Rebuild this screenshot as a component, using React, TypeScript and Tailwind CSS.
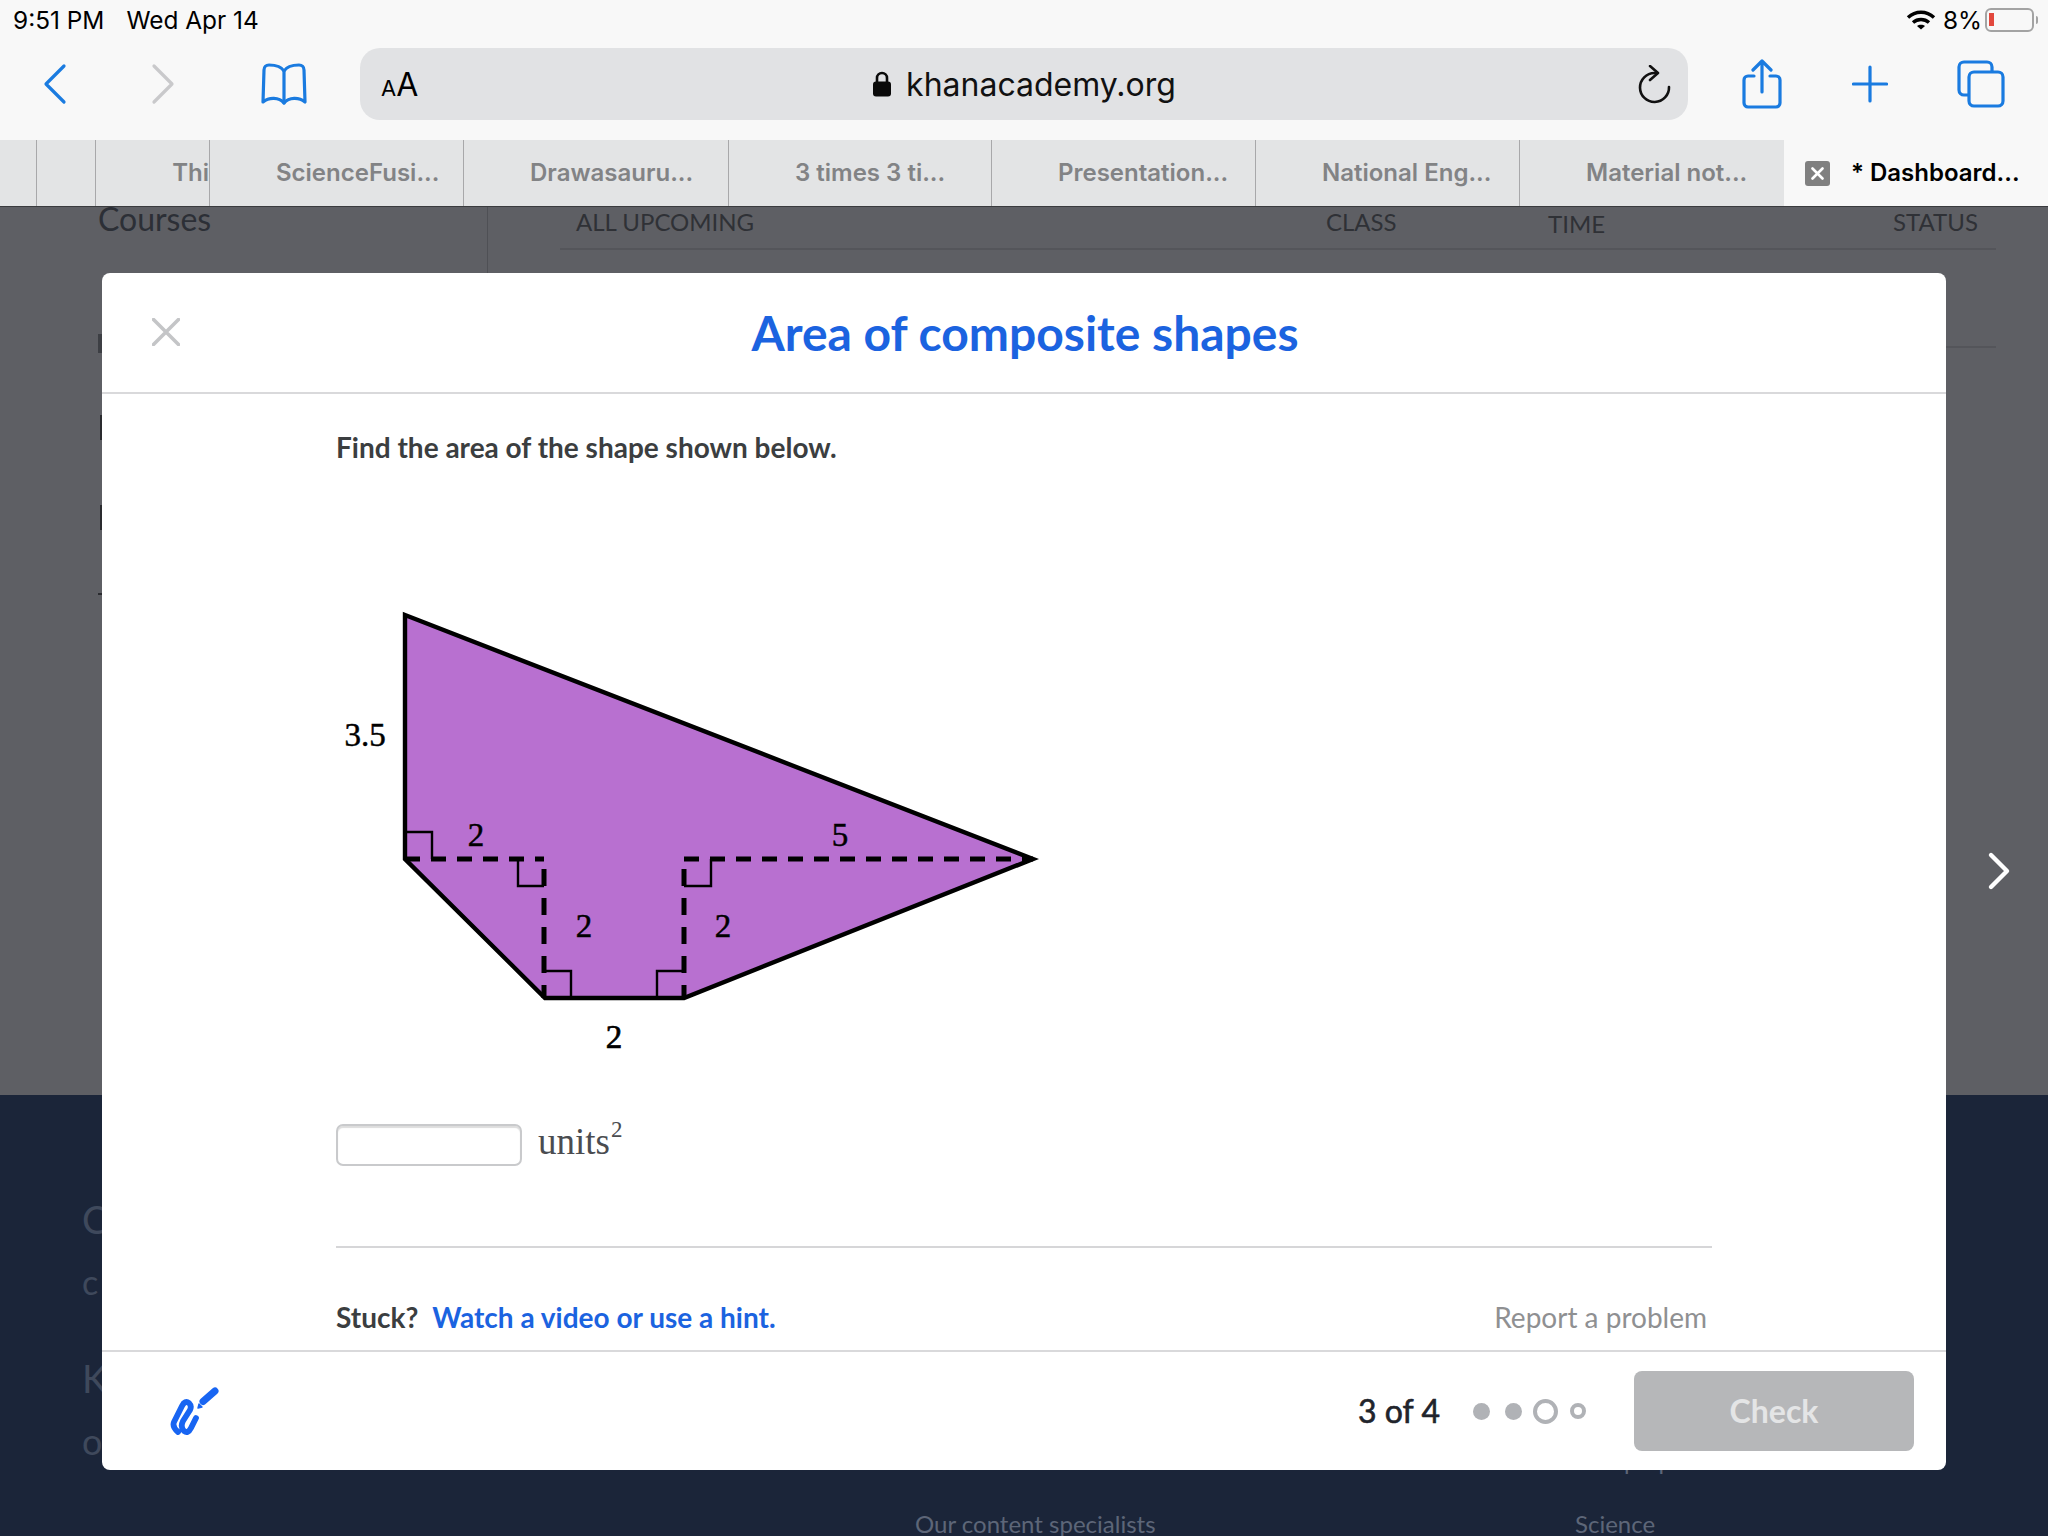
import React from "react";

const lato = "font-['Lato',sans-serif]";
const inter = "font-['Inter',sans-serif]";

const tabs: { w: string; cls: string; label?: string }[] = [
  { w: "w-[37px]", cls: "border-r border-r-[#a8a8aa]" },
  { w: "w-[59px]", cls: "border-r border-r-[#a8a8aa]" },
  { w: "w-[114px]", cls: "border-r border-r-[#a8a8aa] justify-end", label: "Thi" },
  { w: "w-[254px]", cls: "border-r border-r-[#a8a8aa] pl-[66px]", label: "ScienceFusi..." },
  { w: "w-[265px]", cls: "border-r border-r-[#a8a8aa] pl-[66px]", label: "Drawasauru..." },
  { w: "w-[263px]", cls: "border-r border-r-[#a8a8aa] pl-[66px]", label: "3 times 3 ti..." },
  { w: "w-[264px]", cls: "border-r border-r-[#a8a8aa] pl-[66px]", label: "Presentation..." },
  { w: "w-[264px]", cls: "border-r border-r-[#a8a8aa] pl-[66px]", label: "National Eng..." },
  { w: "w-[264px]", cls: "pl-[66px]", label: "Material not..." },
];

function StatusBar() {
  return (
    <div className={`h-[40px] flex items-center pl-[13px] pr-[10px] text-[24.4px] text-black ${inter}`}>
      <span>9:51 PM</span>
      <span className="ml-[22px]">Wed Apr 14</span>
      <div className="ml-auto flex items-center">
        <svg width="30" height="22" viewBox="0 0 30 22" fill="none" stroke="black" strokeWidth="3.4">
          <path d="M2 8.5 C9.5 1.5 20.5 1.5 28 8.5" />
          <path d="M7 13.5 C11.5 9.5 18.5 9.5 23 13.5" />
          <path d="M15 20.5 L11 17 C13 15.2 17 15.2 19 17 Z" fill="black" stroke="none" />
        </svg>
        <span className="ml-[7px]">8%</span>
        <div className="ml-[3px] w-[49px] h-[24px] rounded-[6px] border-2 border-[#a3a3a3] flex items-center pl-[2px]">
          <div className="w-[5px] h-[13px] bg-[#e2483d]" />
        </div>
        <div className="ml-[2px] w-[2px] h-[8px] bg-[#a3a3a3] rounded-r" />
      </div>
    </div>
  );
}

function Toolbar() {
  const blue = "#1a7be0";
  return (
    <div className="h-[100px] flex items-start">
      <div className="w-[360px] h-[88px] flex items-center shrink-0">
        <svg className="ml-[40px]" width="28" height="44" viewBox="0 0 28 44" fill="none" stroke={blue} strokeWidth="3.2" strokeLinecap="round" strokeLinejoin="round">
          <path d="M24 4 L6 22 L24 40" />
        </svg>
        <svg className="ml-[81px]" width="28" height="44" viewBox="0 0 28 44" fill="none" stroke="#c9c9cb" strokeWidth="3.2" strokeLinecap="round" strokeLinejoin="round">
          <path d="M5 4 L23 22 L5 40" />
        </svg>
        <svg className="ml-[84px]" width="46" height="44" viewBox="0 0 46 44" fill="none" stroke={blue} strokeWidth="3.2" strokeLinejoin="round" strokeLinecap="round">
          <path d="M23 9 C20 4 14 3 8 3 C5 3 3 5 3 8 L2 40 C8 35 18 35 23 41 C28 35 38 35 44 40 L43 8 C43 5 41 3 38 3 C32 3 26 4 23 9 Z" />
          <path d="M23 9 L23 41" />
        </svg>
      </div>
      <div className="mt-[8px] w-[1328px] h-[72px] rounded-[20px] bg-[#e1e2e4] relative flex items-center justify-center shrink-0">
        <div className="absolute left-[21px] top-[13px] flex items-baseline text-black font-['Inter',sans-serif]">
          <span className="text-[22px]">A</span>
          <span className="text-[32px]">A</span>
        </div>
        <div className={`flex items-center ${inter}`}>
          <svg width="20" height="28" viewBox="0 0 20 28">
            <path d="M5 13 V8 a5 5 0 0 1 10 0 V13" fill="none" stroke="#0a0a0a" strokeWidth="2.6" />
            <rect x="1" y="11.5" width="18" height="15" rx="3" fill="#0a0a0a" />
          </svg>
          <span className="ml-[14px] text-[32px] leading-none text-[#111] mt-[1px]">khanacademy.org</span>
        </div>
        <svg className="absolute right-[17px] top-[17px]" width="34" height="40" viewBox="0 0 34 40" fill="none" stroke="#111" strokeWidth="2.6" strokeLinecap="round" strokeLinejoin="round">
          <path d="M32 22 A14.5 14.5 0 1 1 17.5 8 L20 8" />
          <path d="M13 1 L21 8 L13 15" />
        </svg>
      </div>
      <div className="h-[88px] flex-1 flex items-center">
        <svg className="ml-[54px]" width="40" height="50" viewBox="0 0 40 50" fill="none" stroke={blue} strokeWidth="3.2" strokeLinecap="round" strokeLinejoin="round">
          <path d="M12 17 H6 a4 4 0 0 0 -4 4 V44 a4 4 0 0 0 4 4 H34 a4 4 0 0 0 4 -4 V21 a4 4 0 0 0 -4 -4 H28" />
          <path d="M20 33 V3 M11 11 L20 2 L29 11" />
        </svg>
        <svg className="ml-[70px]" width="36" height="38" viewBox="0 0 36 38" fill="none" stroke={blue} strokeWidth="3.2" strokeLinecap="round">
          <path d="M18 2 V36 M1.5 19 H34.5" />
        </svg>
        <svg className="ml-[69px]" width="48" height="48" viewBox="0 0 48 48" fill="none" stroke={blue} strokeWidth="3.2" strokeLinejoin="round">
          <path d="M11 35 H7 a5 5 0 0 1 -5 -5 V7 a5 5 0 0 1 5 -5 H30 a5 5 0 0 1 5 5 V11" />
          <rect x="12" y="12" width="34" height="34" rx="5" />
        </svg>
      </div>
    </div>
  );
}

function TabBar() {
  return (
    <div className="h-[66px] flex shrink-0">
      {tabs.map((t, i) => (
        <div
          key={i}
          className={`${t.w} ${t.cls} shrink-0 h-full bg-[#e3e4e5] flex items-center overflow-hidden text-[24px] font-semibold text-[#828385] whitespace-nowrap ${inter}`}
        >
          {t.label}
        </div>
      ))}
      <div className={`flex-1 min-w-0 h-full flex items-center pl-[21px] text-[24px] font-semibold text-black whitespace-nowrap ${inter}`}>
        <div className="w-[25px] h-[25px] rounded-[3px] bg-[#808080] flex items-center justify-center shrink-0">
          <svg width="13" height="13" viewBox="0 0 13 13" stroke="white" strokeWidth="2.6" strokeLinecap="round">
            <path d="M1.5 1.5 L11.5 11.5 M11.5 1.5 L1.5 11.5" />
          </svg>
        </div>
        <span className="ml-[21px]">* Dashboard...</span>
      </div>
    </div>
  );
}

function Shape() {
  const dash = { stroke: "#000", strokeWidth: 5, strokeDasharray: "15 11", fill: "none" };
  const thin = { stroke: "#000", strokeWidth: 2.4, fill: "none" };
  const num = "font-['Liberation_Serif',serif]";
  return (
    <svg width="780" height="470" viewBox="330 600 780 470" className="block">
      <polygon points="405,615 1033,859 684,998 545,998 405,859" fill="#b870d0" stroke="#000" strokeWidth="4.4" strokeLinejoin="miter" />
      <path d="M405 859 H544" {...dash} />
      <path d="M684 859 H1033" {...dash} />
      <path d="M544 869 V998" {...dash} strokeDasharray="17 12" />
      <path d="M684 869 V998" {...dash} strokeDasharray="17 12" />
      <path d="M405 832 H432 V859" {...thin} />
      <path d="M518 859 V886 H544" {...thin} />
      <path d="M711 859 V886 H684" {...thin} />
      <path d="M544 971 H571 V998" {...thin} />
      <path d="M684 971 H657 V998" {...thin} />
      <g className={num} fontSize="33" fill="#000" stroke="#000" strokeWidth="0.5" textAnchor="middle">
        <text x="365" y="746">3.5</text>
        <text x="476" y="846">2</text>
        <text x="840" y="846">5</text>
        <text x="584" y="937">2</text>
        <text x="723" y="937">2</text>
        <text x="614" y="1048" strokeWidth="0.7">2</text>
      </g>
    </svg>
  );
}

function Modal() {
  return (
    <div className={`absolute left-[102px] top-[273px] w-[1844px] h-[1197px] bg-white rounded-[8px] flex flex-col ${lato}`}>
      <div className="relative h-[121px] border-b-2 border-b-[#d9d9db] flex items-center justify-center shrink-0">
        <svg className="absolute left-[50px] top-[45px]" width="28" height="28" viewBox="0 0 28 28" stroke="#c4c5c7" strokeWidth="3.6" strokeLinecap="round">
          <path d="M1.5 1.5 L26.5 26.5 M26.5 1.5 L1.5 26.5" />
        </svg>
        <h1 className="text-[48px] font-bold text-[#1b63e0] leading-none ml-[2px]">Area of composite shapes</h1>
      </div>
      <div className="flex-1 flex flex-col pl-[234px] pr-[234px]">
        <p className="mt-[36px] text-[28px] leading-[34px] font-bold text-[#3b3e40]">Find the area of the shape shown below.</p>
        <div className="mt-[136px] ml-[-6px]">
          <Shape />
        </div>
        <div className="mt-[55px] flex items-center h-[40px]">
          <div className="w-[186px] h-[42px] rounded-[7px] border-2 border-[#c9cacc] shadow-[inset_0_2px_1px_#ddd]" />
          <span className="ml-[16px] mt-[-7px] text-[37px] leading-none text-[#4a4c50] font-['Liberation_Serif',serif]">
            units<sup className="text-[23px] ml-[1px] top-[-17px] relative align-baseline">2</sup>
          </span>
        </div>
        <div className="mt-[81px] h-[2px] bg-[#d6d6d8]" />
        <div className="mt-[52px] flex items-center h-[34px] text-[28px]">
          <span className="font-bold text-[#3b3e40]">Stuck?</span>
          <span className="ml-[14px] font-bold text-[#1b63e0]">Watch a video or use a hint.</span>
          <span className="ml-auto mr-[5px] text-[#8f9092]">Report a problem</span>
        </div>
      </div>
      <div className="h-[120px] border-t-2 border-t-[#d9d9db] flex items-center pr-[32px] shrink-0">
        <svg className="ml-[68px]" width="50" height="50" viewBox="0 0 50 50" fill="none" strokeLinecap="round" strokeLinejoin="round">
          <path d="M8 46 Q2 41 4 36 L12 20 Q15 14 19 17 Q22 20 20 24 L13 35 Q10 41 14 45 Q18 48 21 42 L26 32" stroke="#1865f2" strokeWidth="5.8" />
          <path d="M33 15.5 L45 5" stroke="#1865f2" strokeWidth="7" />
          <path d="M28 22 L29 18 L32 21 Z" fill="#1865f2" stroke="#1865f2" strokeWidth="1.4" />
        </svg>
        <span className="ml-auto text-[32px] text-[#21242c] [-webkit-text-stroke:0.6px_#21242c]">3 of 4</span>
        <div className="ml-[33px] flex items-center">
          <div className="w-[17px] h-[17px] rounded-full bg-[#b0b2b6]" />
          <div className="ml-[15px] w-[17px] h-[17px] rounded-full bg-[#b0b2b6]" />
          <div className="ml-[11px] w-[25px] h-[25px] rounded-full border-[4px] border-[#b0b2b6]" />
          <div className="ml-[12px] w-[16px] h-[16px] rounded-full border-[4px] border-[#b0b2b6]" />
        </div>
        <div className="ml-[48px] w-[280px] h-[80px] rounded-[8px] bg-[#b6b7b9] flex items-center justify-center text-[32px] font-bold text-[#e4e5e6]">
          Check
        </div>
      </div>
    </div>
  );
}

function Backdrop() {
  return (
    <div className={`relative h-[889px] bg-[#5e5f64] shrink-0 flex border-t border-t-[#3a3b3e] ${lato}`}>
      <div className="w-[488px] h-[67px] border-r border-r-[#4f5055] pl-[98px] shrink-0">
        <p className="mt-[-4px] text-[32px] leading-[32px] text-[#2c2f36]">Courses</p>
      </div>
      <div className="flex-1 pr-[52px] pl-[72px]">
        <div className="h-[43px] border-b-2 border-b-[#54555a] flex items-center text-[24px] text-[#2f3136] pb-[11px]">
          <span className="pl-[16px] w-[766px]">ALL UPCOMING</span>
          <span className="w-[222px]">CLASS</span>
          <span className="w-[345px] mt-[4px]">TIME</span>
          <span>STATUS</span>
        </div>
        <div className="mt-[96px] h-[2px] bg-[#54555a]" />
      </div>
      <div className="absolute left-[98px] top-[127px] w-[4px] h-[19px] bg-[#3d3f44]" />
      <div className="absolute left-[100px] top-[208px] w-[2px] h-[25px] bg-[#2a2b2f]" />
      <div className="absolute left-[100px] top-[298px] w-[2px] h-[25px] bg-[#2a2b2f]" />
      <div className="absolute left-[98px] top-[386px] w-[4px] h-[2px] bg-[#2a2b2f]" />
      <svg className="absolute left-[1987px] top-[644px]" width="24" height="40" viewBox="0 0 24 40" fill="none" stroke="white" strokeWidth="4.4" strokeLinecap="round" strokeLinejoin="round">
        <path d="M4 4 L20 20 L4 36" />
      </svg>
    </div>
  );
}

function NavyFooter() {
  return (
    <div className={`flex-1 bg-[#1b2539] relative overflow-hidden text-[#3f495c] pl-[82px] ${lato}`}>
      <p className="mt-[101px] text-[38px] leading-[46px]">C</p>
      <p className="mt-[17px] text-[34px] leading-[46px]">c</p>
      <p className="mt-[50px] text-[38px] leading-[46px]">K</p>
      <p className="mt-[17px] text-[36px] leading-[46px]">o</p>
      <div className="absolute left-0 right-0 top-[354px] flex text-[24px] leading-[24px] text-[#5d6678]">
        <span className="ml-[1247px] w-[328px]">News</span>
        <span>Test prep</span>
      </div>
      <div className="absolute left-0 right-0 top-[417px] flex text-[24px] leading-[24px] text-[#5d6678]">
        <span className="ml-[915px] w-[660px]">Our content specialists</span>
        <span>Science</span>
      </div>
    </div>
  );
}

export default function App() {
  return (
    <div className="relative w-[2048px] h-[1536px] overflow-hidden flex flex-col bg-[#f8f8f8]">
      <div className="shrink-0 bg-[#f8f8f8]">
        <StatusBar />
        <Toolbar />
      </div>
      <TabBar />
      <Backdrop />
      <NavyFooter />
      <Modal />
    </div>
  );
}
